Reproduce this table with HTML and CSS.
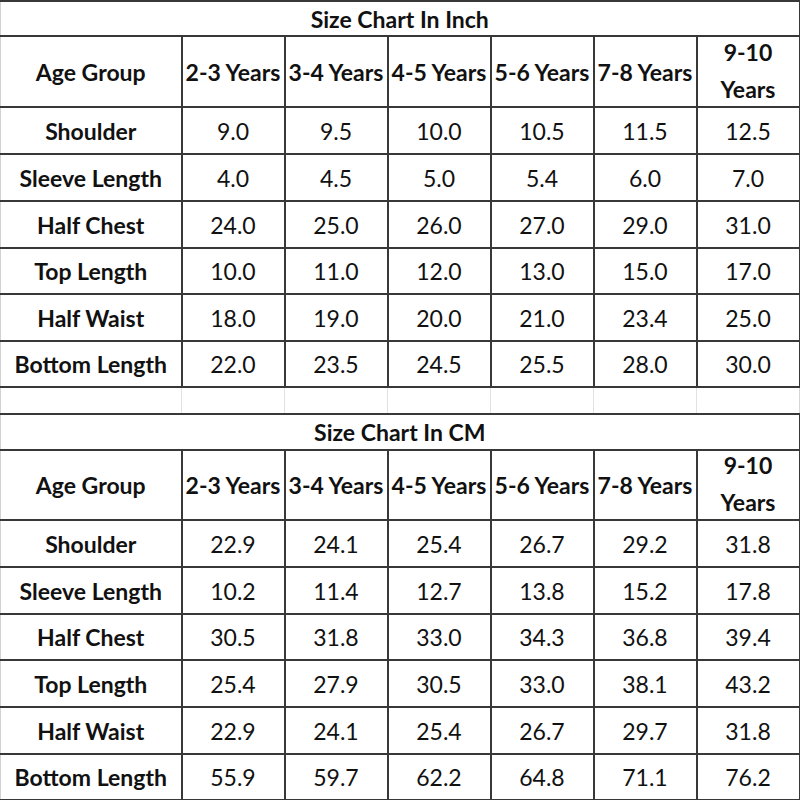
FILE: index.html
```html
<!DOCTYPE html>
<html>
<head>
<meta charset="utf-8">
<link rel="stylesheet" href="styles.css">
</head>
<body>
<table class="chart">
  <colgroup>
    <col class="c-label"><col class="c-val"><col class="c-val"><col class="c-val"><col class="c-val"><col class="c-val"><col class="c-val">
  </colgroup>
  <tbody>
    <tr class="r-title1"><th colspan="7" class="title">Size Chart In Inch</th></tr>
    <tr class="r-head1"><th class="lbl">Age Group</th><th>2-3 Years</th><th>3-4 Years</th><th>4-5 Years</th><th>5-6 Years</th><th>7-8 Years</th><th><span class="wrap">9-10<br>Years</span></th></tr>
    <tr class="h47"><th class="lbl">Shoulder</th><td>9.0</td><td>9.5</td><td>10.0</td><td>10.5</td><td>11.5</td><td>12.5</td></tr>
    <tr class="h47"><th class="lbl">Sleeve Length</th><td>4.0</td><td>4.5</td><td>5.0</td><td>5.4</td><td>6.0</td><td>7.0</td></tr>
    <tr class="h47"><th class="lbl">Half Chest</th><td>24.0</td><td>25.0</td><td>26.0</td><td>27.0</td><td>29.0</td><td>31.0</td></tr>
    <tr class="h46"><th class="lbl">Top Length</th><td>10.0</td><td>11.0</td><td>12.0</td><td>13.0</td><td>15.0</td><td>17.0</td></tr>
    <tr class="h47"><th class="lbl">Half Waist</th><td>18.0</td><td>19.0</td><td>20.0</td><td>21.0</td><td>23.4</td><td>25.0</td></tr>
    <tr class="h46"><th class="lbl">Bottom Length</th><td>22.0</td><td>23.5</td><td>24.5</td><td>25.5</td><td>28.0</td><td>30.0</td></tr>
    <tr class="r-gap"><td></td><td></td><td></td><td></td><td></td><td></td><td></td></tr>
    <tr class="r-title2"><th colspan="7" class="title">Size Chart In CM</th></tr>
    <tr class="r-head2"><th class="lbl">Age Group</th><th>2-3 Years</th><th>3-4 Years</th><th>4-5 Years</th><th>5-6 Years</th><th>7-8 Years</th><th><span class="wrap">9-10<br>Years</span></th></tr>
    <tr class="h47"><th class="lbl">Shoulder</th><td>22.9</td><td>24.1</td><td>25.4</td><td>26.7</td><td>29.2</td><td>31.8</td></tr>
    <tr class="h47"><th class="lbl">Sleeve Length</th><td>10.2</td><td>11.4</td><td>12.7</td><td>13.8</td><td>15.2</td><td>17.8</td></tr>
    <tr class="h46"><th class="lbl">Half Chest</th><td>30.5</td><td>31.8</td><td>33.0</td><td>34.3</td><td>36.8</td><td>39.4</td></tr>
    <tr class="h47"><th class="lbl">Top Length</th><td>25.4</td><td>27.9</td><td>30.5</td><td>33.0</td><td>38.1</td><td>43.2</td></tr>
    <tr class="h47"><th class="lbl">Half Waist</th><td>22.9</td><td>24.1</td><td>25.4</td><td>26.7</td><td>29.7</td><td>31.8</td></tr>
    <tr class="h46"><th class="lbl">Bottom Length</th><td>55.9</td><td>59.7</td><td>62.2</td><td>64.8</td><td>71.1</td><td>76.2</td></tr>
  </tbody>
</table>
</body>
</html>
```

FILE: styles.css
```css
html, body {
  margin: 0;
  padding: 0;
  background: #ffffff;
}

.chart {
  border-collapse: collapse;
  table-layout: fixed;
  width: 800px;
  font-family: Lato, "Open Sans", sans-serif;
  color: #111111;
}

.c-label { width: 181px; }
.c-val { width: 103px; }

.chart th,
.chart td {
  border: 2px solid #383838;
  padding: 0;
  text-align: center;
  vertical-align: middle;
  font-size: 23px;
  line-height: 24px;
  white-space: nowrap;
  overflow: hidden;
}

.chart tr > :first-child {
  border-left: 1px solid #d2d2d2;
}

.chart th { font-weight: 700; }
.chart td { font-weight: 400; }

.wrap {
  display: block;
  line-height: 37px;
  margin: -13px 0 -11px;
}

.r-title1 { height: 35px; }
.r-head1 { height: 71px; }
.r-title2 { height: 36px; }
.r-head2 { height: 70px; }
.h47 { height: 47px; }
.h46 { height: 46px; }

.r-gap { height: 27px; }
.chart .r-gap td {
  border-left: 1px solid #e2e2e2;
  border-right: 1px solid #e2e2e2;
}
.chart .r-gap td:first-child { border-left: 1px solid #d2d2d2; }
.chart .r-gap td:last-child { border-right: 1px solid #d6d6d6; }
```
